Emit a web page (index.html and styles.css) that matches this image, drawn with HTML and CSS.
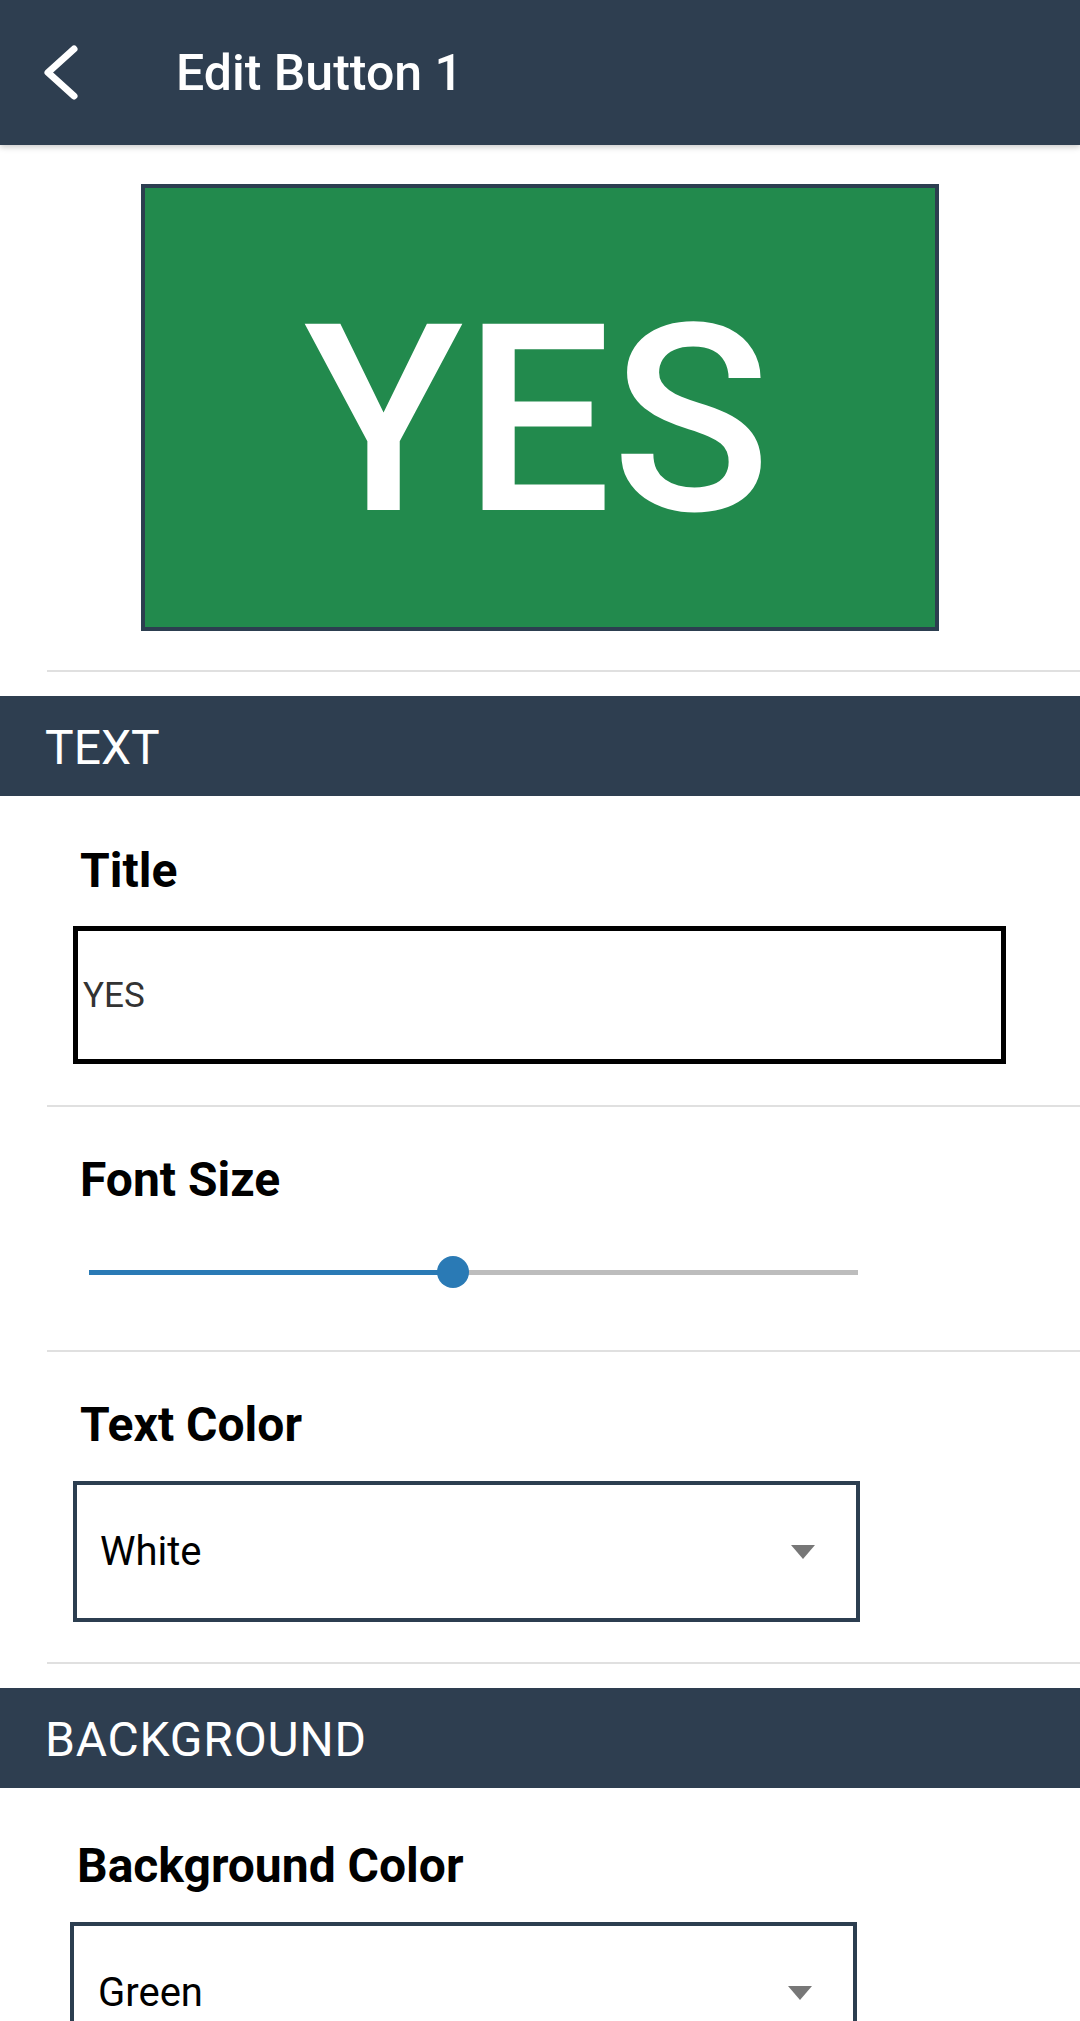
FILE: index.html
```html
<!DOCTYPE html>
<html lang="en">
<head>
<meta charset="utf-8">
<title>Edit Button 1</title>
<link rel="stylesheet" href="styles.css">
</head>
<body>
<header class="appbar">
  <svg class="back" width="42" height="64" viewBox="0 0 42 64" aria-hidden="true">
    <polyline points="34,8 8,31.5 34,55" fill="none" stroke="#ffffff" stroke-width="7" stroke-linecap="round" stroke-linejoin="round"/>
  </svg>
  <h1 class="appbar-title">Edit Button 1</h1>
</header>

<div class="preview">
  <div class="preview-btn">YES</div>
</div>
<div class="divider"></div>

<div class="section-bar">TEXT</div>

<div class="field field-first">
  <div class="label">Title</div>
  <div class="text-input">YES</div>
</div>
<div class="divider"></div>

<div class="field field-slider">
  <div class="label">Font Size</div>
  <div class="slider">
    <div class="track"></div>
    <div class="track-fill" style="width: 47.3%"></div>
    <div class="thumb" style="left: 47.3%"></div>
  </div>
</div>
<div class="divider"></div>

<div class="field field-select">
  <div class="label">Text Color</div>
  <div class="select"><span class="select-value">White</span><span class="caret"></span></div>
</div>
<div class="divider"></div>

<div class="section-bar section-bar-wide">BACKGROUND</div>

<div class="field field-bg">
  <div class="label">Background Color</div>
  <div class="select"><span class="select-value">Green</span><span class="caret"></span></div>
</div>
</body>
</html>
```
FILE: styles.css
```css
* { box-sizing: border-box; }
html, body { margin: 0; padding: 0; background: #ffffff; }
body {
  font-family: Roboto, "Noto Sans", "Liberation Sans", sans-serif;
  color: #000;
  overflow: hidden;
}

.appbar {
  height: 145px;
  background: #2e3e50;
  display: flex;
  align-items: center;
  position: relative;
  z-index: 2;
  box-shadow: 0 2px 6px rgba(0, 0, 0, 0.22);
}
.back { margin-left: 40px; flex: none; }
.appbar-title {
  margin: 0 0 0 94px;
  font-size: 50px;
  font-weight: 500;
  color: #ffffff;
  line-height: 1.2;
}

.preview {
  padding: 39px 0;
  display: flex;
  justify-content: center;
}
.preview-btn {
  width: 798px;
  height: 447px;
  background: #228a4d;
  border: 4px solid #2c3e50;
  color: #ffffff;
  font-size: 262px;
  font-weight: 500;
  display: flex;
  align-items: center;
  justify-content: center;
  padding-top: 26px;
  padding-right: 6px;
}

.divider {
  height: 2px;
  margin-left: 47px;
  background: #e0e0e0;
}

.section-bar {
  margin-top: 24px;
  height: 100px;
  background: #2e3e50;
  color: #ffffff;
  font-size: 48px;
  display: flex;
  align-items: center;
  padding-left: 45px;
  padding-top: 3px;
}
.section-bar-wide { letter-spacing: 0.8px; }

.field { padding-left: 73px; }
.field-first { padding-top: 47px; padding-bottom: 41px; }
.field-slider { padding-top: 45px; padding-bottom: 62px; }
.field-select { padding-top: 45px; padding-bottom: 40px; }
.field-bg { padding-top: 50px; padding-left: 70px; }

.label {
  font-size: 48px;
  font-weight: 700;
  line-height: 56px;
  padding-left: 7px;
}

.text-input {
  margin-top: 27px;
  width: 933px;
  height: 138px;
  border: 5px solid #000000;
  padding-left: 5px;
  font-size: 35px;
  color: #333333;
  display: flex;
  align-items: center;
}

.slider {
  position: relative;
  margin-top: 48px;
  margin-left: 16px;
  width: 769px;
  height: 32px;
}
.track {
  position: absolute;
  left: 0; right: 0;
  top: 14px;
  height: 5px;
  background: #bdbdbd;
}
.track-fill {
  position: absolute;
  left: 0;
  top: 14px;
  height: 5px;
  background: #2a7ab5;
}
.thumb {
  position: absolute;
  top: 0;
  width: 32px;
  height: 32px;
  margin-left: -16px;
  border-radius: 50%;
  background: #2a7ab5;
}

.select {
  margin-top: 28px;
  width: 787px;
  height: 141px;
  border: 4px solid #2c3e50;
  display: flex;
  align-items: center;
  justify-content: space-between;
  padding-left: 23px;
  padding-right: 41px;
}
.field-bg .select { padding-left: 24px; }
.select-value { font-size: 40px; color: #000; }
.caret {
  width: 0; height: 0;
  border-left: 12.5px solid transparent;
  border-right: 12.5px solid transparent;
  border-top: 14px solid #777777;
}
```
